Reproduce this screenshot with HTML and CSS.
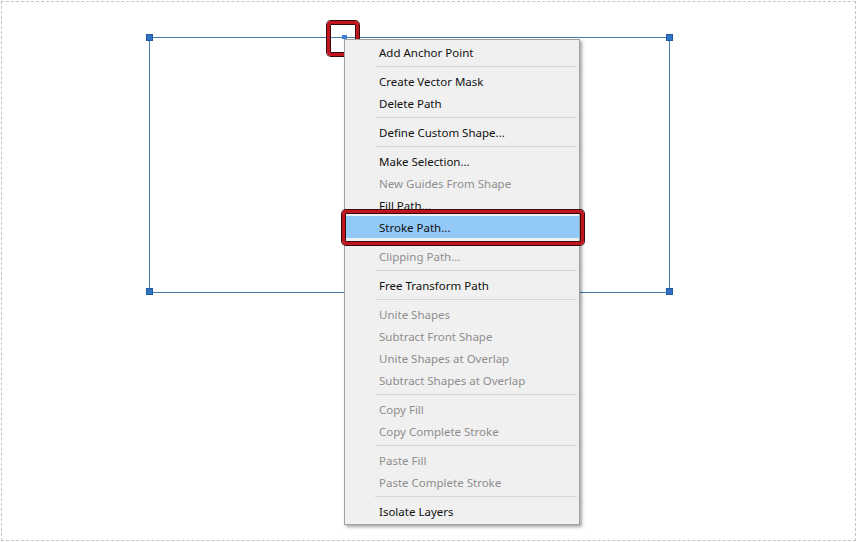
FILE: index.html
```html
<!doctype html>
<html lang="en">
  <head>
    <meta charset="UTF-8" />
    <title>Path Context Menu</title>
    <link rel="stylesheet" href="styles.css">
  </head>
  <body>
    <div class="frame">
      <!-- Path on the canvas -->
      <div class="path-box"></div>
      <span class="handle h-tl"></span>
      <span class="handle h-tr"></span>
      <span class="handle h-bl"></span>
      <span class="handle h-br"></span>
      <span class="handle-mid"></span>
      <span class="mark-point"></span>

      <!-- Context menu -->
      <ul class="menu">
        <li class="item">Add Anchor Point</li>
        <li class="sep"></li>
        <li class="item">Create Vector Mask</li>
        <li class="item">Delete Path</li>
        <li class="sep"></li>
        <li class="item">Define Custom Shape...</li>
        <li class="sep"></li>
        <li class="item">Make Selection...</li>
        <li class="item disabled">New Guides From Shape</li>
        <li class="item">Fill Path...</li>
        <li class="item active">Stroke Path...</li>
        <li class="sep"></li>
        <li class="item disabled">Clipping Path...</li>
        <li class="sep"></li>
        <li class="item">Free Transform Path</li>
        <li class="sep"></li>
        <li class="item disabled">Unite Shapes</li>
        <li class="item disabled">Subtract Front Shape</li>
        <li class="item disabled">Unite Shapes at Overlap</li>
        <li class="item disabled">Subtract Shapes at Overlap</li>
        <li class="sep"></li>
        <li class="item disabled">Copy Fill</li>
        <li class="item disabled">Copy Complete Stroke</li>
        <li class="sep"></li>
        <li class="item disabled">Paste Fill</li>
        <li class="item disabled">Paste Complete Stroke</li>
        <li class="sep"></li>
        <li class="item">Isolate Layers</li>
      </ul>
    </div>
  </body>
</html>
```

FILE: styles.css
```css
body {
  margin: 0;
  background-color: #fff;
  font-family: "Noto Sans", "Open Sans", sans-serif;
}
.frame {
  position: relative;
  width: 857px;
  height: 542px;
  overflow: hidden;
}
.frame::before {
  content: "";
  position: absolute;
  left: 1px;
  top: 1px;
  width: 853px;
  height: 538px;
  border: 1px dashed #c4c4c4;
}
/* path rectangle + anchor handles */
.path-box {
  position: absolute;
  left: 149px;
  top: 37px;
  width: 519px;
  height: 254px;
  border: 1px solid #4a7aa6;
}
.handle {
  position: absolute;
  width: 5px;
  height: 5px;
  background-color: #2f72c4;
  border: 1px solid #1d5aa0;
}
.h-tl { left: 146px; top: 34px; }
.h-tr { left: 666px; top: 34px; }
.h-bl { left: 146px; top: 288px; }
.h-br { left: 666px; top: 288px; }
.handle-mid {
  position: absolute;
  left: 342px;
  top: 35px;
  width: 5px;
  height: 4px;
  background-color: #3d82d6;
}
.mark-point {
  position: absolute;
  left: 327px;
  top: 21px;
  width: 26px;
  height: 29px;
  border: 3px solid #c0141e;
  border-radius: 4px;
  box-shadow: 0 0 0 1px #3a0a0a, inset 0 0 0 1px #3a0a0a;
}
/* context menu */
.menu {
  position: absolute;
  left: 344px;
  top: 39px;
  width: 234px;
  margin: 0;
  padding: 1px 0 2px;
  list-style: none;
  background-color: #f0f0f0;
  border: 1px solid #a0a0a0;
  box-shadow: 2px 2px 3px rgba(0, 0, 0, 0.35);
  font-size: 11.5px;
  color: #111;
}
.item {
  position: relative;
  height: 22px;
  line-height: 23px;
  padding-left: 34px;
  white-space: nowrap;
}
.item.disabled {
  color: #8e8e8e;
}
.item.active {
  background-color: #93c9f7;
}
.item.active::after {
  content: "";
  position: absolute;
  left: -3px;
  top: -6px;
  right: -5px;
  bottom: -7px;
  border: 3px solid #c0141e;
  border-radius: 4px;
  box-shadow: 0 0 0 1px #3a0a0a, inset 0 0 0 1px #3a0a0a;
}
.sep {
  height: 7px;
  margin: 0 2px 0 30px;
  background: linear-gradient(#d6d6d6, #d6d6d6) no-repeat 0 3px / 100% 1px;
}
```
